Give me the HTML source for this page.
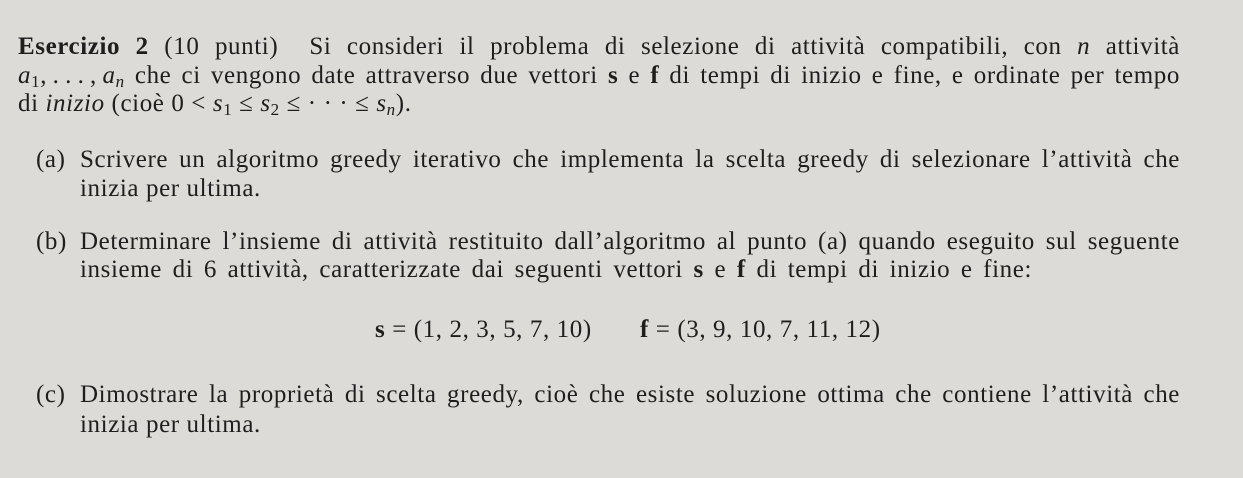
<!DOCTYPE html>
<html><head><meta charset="utf-8"><style>
html,body{margin:0;padding:0}
body{width:1243px;height:478px;background:#dddbd7;position:relative;overflow:hidden;font-family:"Liberation Serif","DejaVu Serif",serif;font-size:25px;letter-spacing:0.6px;color:#1e1e1e}
.l{position:absolute;height:28px;line-height:28px;white-space:nowrap}
.j{text-align:justify;text-align-last:justify;white-space:normal;overflow:hidden}
b{font-weight:bold}
sub{font-size:17px;vertical-align:-4px;line-height:0}
i{font-style:italic}
</style></head><body>
<div class="l j" style="left:18px;top:33px;width:1162px"><b>Esercizio 2</b> (10 punti) &nbsp;Si consideri il problema di selezione di attività compatibili, con <i>n</i> attività</div>
<div class="l j" style="left:18px;top:62px;width:1162px"><i>a</i><sub>1</sub>,&#8201;.&#8201;.&#8201;.&#8201;,&#8201;<i>a<sub>n</sub></i> che ci vengono date attraverso due vettori <b>s</b> e <b>f</b> di tempi di inizio e fine, e ordinate per tempo</div>
<div class="l" style="left:18px;top:90px">di <i>inizio</i> (cioè 0 &lt; <i>s</i><sub>1</sub> ≤ <i>s</i><sub>2</sub> ≤ · · · ≤ <i>s<sub>n</sub></i>).</div>

<div class="l" style="left:36px;top:146px">(a)</div>
<div class="l j" style="left:80px;top:146px;width:1100px">Scrivere un algoritmo greedy iterativo che implementa la scelta greedy di selezionare l’attività che</div>
<div class="l" style="left:80px;top:175px">inizia per ultima.</div>

<div class="l" style="left:36px;top:228px">(b)</div>
<div class="l j" style="left:80px;top:228px;width:1100px">Determinare l’insieme di attività restituito dall’algoritmo al punto (a) quando eseguito sul seguente</div>
<div class="l j" style="left:80px;top:256px;width:952px">insieme di 6 attività, caratterizzate dai seguenti vettori <b>s</b> e <b>f</b> di tempi di inizio e fine:</div>

<div class="l" style="left:375px;top:316px"><b>s</b> = (1, 2, 3, 5, 7, 10)</div>
<div class="l" style="left:640px;top:316px"><b>f</b> = (3, 9, 10, 7, 11, 12)</div>

<div class="l" style="left:36px;top:381px">(c)</div>
<div class="l j" style="left:80px;top:381px;width:1100px">Dimostrare la proprietà di scelta greedy, cioè che esiste soluzione ottima che contiene l’attività che</div>
<div class="l" style="left:80px;top:411px">inizia per ultima.</div>
</body></html>
